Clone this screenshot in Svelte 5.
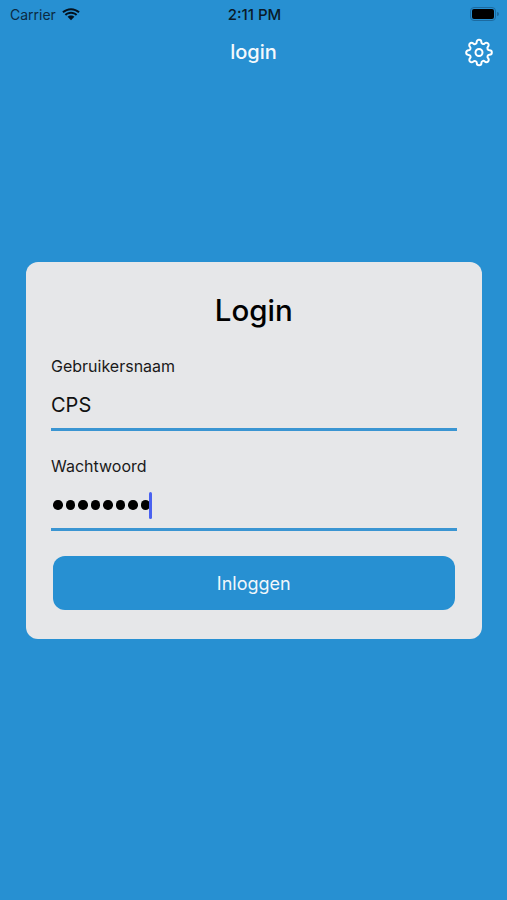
<script>
  const dots = Array(8).fill(0);
</script>

<div class="screen">
  <div class="status">
    <div class="status-left">
      <span>Carrier</span>
      <svg class="wifi" viewBox="0 0 20 14" width="18" height="13">
        <path d="M10 2.200c-3.200 0-6 1.200-8.200 3.200L.3 3.800C2.900 1.400 6.300 0 10 0s7.100 1.400 9.700 3.800l-1.500 1.600C16 3.400 13.200 2.200 10 2.200z" />
        <path d="M10 6.200c-2.100 0-4 .8-5.400 2.100L3 6.700C4.900 5 7.300 4 10 4s5.100 1 7 2.700l-1.600 1.600C14 7 12.100 6.200 10 6.200z" />
        <path d="M10 8c1.500 0 2.800.6 3.800 1.500L10 13.500 6.200 9.500C7.200 8.600 8.500 8 10 8z" />
      </svg>
    </div>
    <div class="status-time">2:11 PM</div>
    <div class="status-right">
      <div class="battery"><div class="battery-fill"></div></div>
      <div class="battery-cap"></div>
    </div>
  </div>

  <header class="nav">
    <div class="nav-title">login</div>
    <svg class="gear" viewBox="0 0 24 24" width="28" height="29" fill="none" stroke="#fff" stroke-width="1.7" stroke-linecap="round" stroke-linejoin="round">
      <circle cx="12" cy="12" r="3" />
      <path d="M19.4 15a1.65 1.65 0 0 0 .33 1.82l.06.06a2 2 0 0 1 0 2.83 2 2 0 0 1-2.83 0l-.06-.06a1.65 1.65 0 0 0-1.82-.33 1.65 1.65 0 0 0-1 1.51V21a2 2 0 0 1-2 2 2 2 0 0 1-2-2v-.09A1.65 1.65 0 0 0 9 19.4a1.65 1.65 0 0 0-1.82.33l-.06.06a2 2 0 0 1-2.83 0 2 2 0 0 1 0-2.83l.06-.06a1.65 1.65 0 0 0 .33-1.82 1.65 1.65 0 0 0-1.51-1H3a2 2 0 0 1-2-2 2 2 0 0 1 2-2h.09A1.65 1.65 0 0 0 4.6 9a1.65 1.65 0 0 0-.33-1.82l-.06-.06a2 2 0 0 1 0-2.83 2 2 0 0 1 2.83 0l.06.06a1.65 1.65 0 0 0 1.82.33H9a1.65 1.65 0 0 0 1-1.51V3a2 2 0 0 1 2-2 2 2 0 0 1 2 2v.09a1.65 1.65 0 0 0 1 1.51 1.65 1.65 0 0 0 1.82-.33l.06-.06a2 2 0 0 1 2.83 0 2 2 0 0 1 0 2.83l-.06.06a1.65 1.65 0 0 0-.33 1.82V9a1.65 1.65 0 0 0 1.51 1H21a2 2 0 0 1 2 2 2 2 0 0 1-2 2h-.09a1.65 1.65 0 0 0-1.51 1z" />
    </svg>
  </header>

  <main class="card">
    <h1>Login</h1>

    <div class="field">
      <div class="label">Gebruikersnaam</div>
      <div class="value">CPS</div>
    </div>

    <div class="field second">
      <div class="label">Wachtwoord</div>
      <div class="value">
        <div class="dots">
          {#each dots as _}
            <span class="dot"></span>
          {/each}
        </div>
        <span class="caret"></span>
      </div>
    </div>

    <button class="submit">Inloggen</button>
  </main>
</div>

<style>
  :global(body) {
    margin: 0;
    background: #2790d2;
  }
  .screen {
    height: 900px;
    background: #2790d2;
    font-family: Inter, "Liberation Sans", sans-serif;
    display: flex;
    flex-direction: column;
    overflow: hidden;
  }
  .status {
    height: 28px;
    padding: 0 8px 0 10px;
    display: grid;
    grid-template-columns: 1fr auto 1fr;
    align-items: center;
    font-size: 14px;
    color: #0b2a42;
  }
  .status-left {
    display: flex;
    align-items: center;
    gap: 6px;
  }
  .wifi {
    fill: #04121e;
  }
  .status-time {
    font-size: 15px;
    font-weight: 500;
    color: #0a1a28;
  }
  .status-right {
    display: flex;
    justify-content: flex-end;
    align-items: center;
  }
  .battery {
    width: 22px;
    height: 10px;
    border: 1px solid #1c6aa0;
    border-radius: 4px;
    padding: 1px;
    display: flex;
  }
  .battery-fill {
    flex: 1;
    background: #000;
    border-radius: 2px;
  }
  .battery-cap {
    width: 2px;
    height: 4px;
    margin-left: 1px;
    background: #1c6aa0;
    border-radius: 0 2px 2px 0;
  }
  .nav {
    height: 48px;
    padding: 0 14px 0 0;
    display: flex;
    align-items: center;
    justify-content: flex-end;
    position: relative;
  }
  .nav-title {
    position: absolute;
    left: 0;
    right: 0;
    text-align: center;
    color: #f4f9fc;
    font-size: 20px;
    font-weight: 500;
  }
  .card {
    margin: 186px 25.5px 0 26px;
    height: 377px;
    padding: 0 25px;
    background: #e6e7e9;
    border-radius: 12px;
  }
  h1 {
    margin: 0;
    padding-top: 30px;
    height: 47px;
    line-height: 37px;
    font-size: 29.5px;
    font-weight: 500;
    text-align: center;
    color: #000;
  }
  .field {
    margin-top: 15px;
    height: 74px;
    border-bottom: 3px solid #3a95d2;
  }
  .second {
    margin-top: 23px;
  }
  .label {
    height: 24px;
    line-height: 24px;
    font-size: 16px;
    color: #1a1a1a;
  }
  .value {
    margin-top: 9px;
    height: 36px;
    line-height: 36px;
    font-size: 20px;
    color: #111;
    display: flex;
    align-items: center;
  }
  .dots {
    display: flex;
    gap: 3px;
    padding-left: 2px;
  }
  .dot {
    width: 9.5px;
    height: 9.5px;
    border-radius: 50%;
    background: #000;
  }
  .caret {
    width: 3px;
    height: 27px;
    margin-left: -1px;
    background: #4a62f0;
    border-radius: 2px;
  }
  .submit {
    display: block;
    margin: 25px 2px 0;
    width: calc(100% - 4px);
    height: 54px;
    border: 0;
    border-radius: 12px;
    background: #2790d2;
    color: #f2f7fb;
    font-family: inherit;
    font-size: 18px;
  }
</style>
